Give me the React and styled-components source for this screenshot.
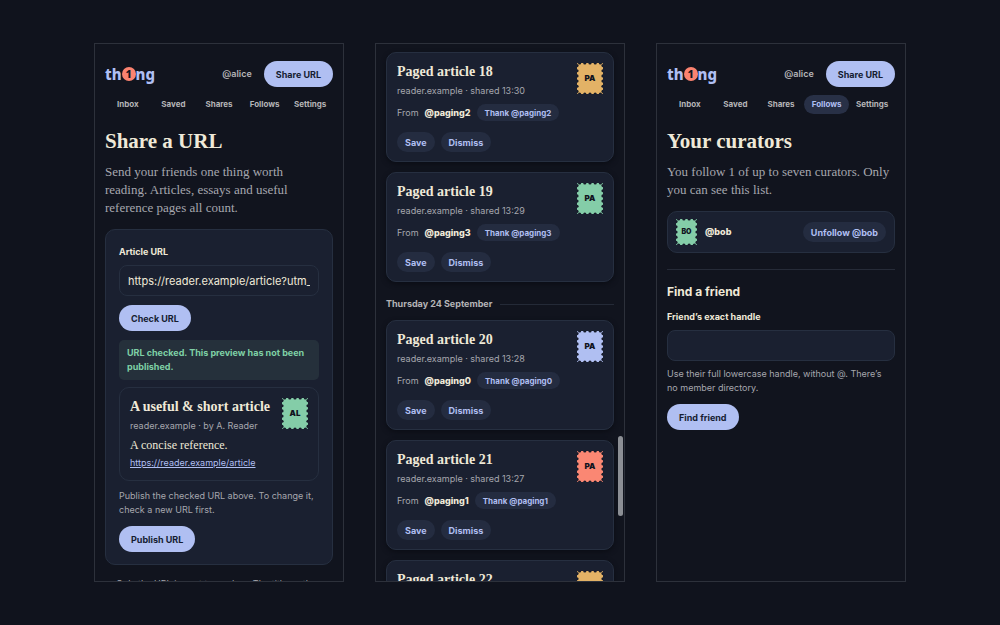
import React from 'react';
import styled, { createGlobalStyle } from 'styled-components';

const sans = `Inter, "Liberation Sans", sans-serif`;
const serif = `"Liberation Serif", serif`;

const GlobalStyle = createGlobalStyle`
  *, *::before, *::after {
    box-sizing: border-box;
  }
  body {
    margin: 0;
    background: #10131d;
    color: #efe9d8;
    font-family: ${sans};
    font-size: 9px;
    line-height: 14px;
  }
  h1, h2, h3, p {
    margin: 0;
  }
  button, input {
    font-family: inherit;
  }
`

const Page = styled.div`
  display: grid;
  grid-template-columns: repeat(3, minmax(0, 1fr));
  gap: 31px;
  min-height: 100vh;
  padding: 43px 94px;
`

const Screen = styled.section`
  position: relative;
  height: calc(100vh - 86px);
  overflow: hidden;
  padding: ${props => props.$scrolled ? '8px' : '17px'} 10px 0;
  border: 1px solid #2d313b;
  background: #11141e;
`

const Header = styled.header`
  display: flex;
  align-items: center;
  gap: 12px;
`

const Brand = styled.a`
  display: flex;
  align-items: center;
  margin-right: auto;
  color: #afbff3;
  font-family: "Noto Sans", sans-serif;
  font-size: 15px;
  font-weight: 800;
  line-height: 20px;
  text-decoration: none;
`

const BrandDot = styled.span`
  display: grid;
  place-items: center;
  width: 14px;
  height: 14px;
  border-radius: 50%;
  background: #fb8370;
  color: #11141e;
  font-size: 11px;
  line-height: 14px;
`

const Account = styled.a`
  color: #b5b4b7;
  font-weight: 600;
  text-decoration: none;
`

const Button = styled.button`
  height: 26px;
  padding: 0 12px;
  border: 0;
  border-radius: 13px;
  background: #b0bff2;
  color: #151c31;
  font-size: 9px;
  font-weight: 700;
`

const Nav = styled.nav`
  display: grid;
  grid-template-columns: repeat(5, 1fr);
  margin-top: 8px;
`

const NavLink = styled.a`
  border-radius: 10px;
  background: ${props => props.$active ? '#283046' : 'transparent'};
  color: ${props => props.$active ? '#b0bff2' : '#b5b4b7'};
  font-size: 8px;
  font-weight: 700;
  line-height: 19px;
  text-align: center;
  text-decoration: none;
`

const Title = styled.h1`
  margin-top: 15px;
  font-family: ${serif};
  font-size: 21px;
  font-weight: 700;
  line-height: 24px;
`

const Lead = styled.p`
  margin-top: 10px;
  color: #a6a7ae;
  font-family: ${serif};
  font-size: 13px;
  line-height: 18px;
`

const Panel = styled.form`
  margin-top: 12px;
  padding: 15px 13px 12px;
  border: 1px solid #262f40;
  border-radius: 10px;
  background: #1a2030;
`

const Label = styled.label`
  display: block;
  font-weight: 700;
`

const Input = styled.input`
  display: block;
  width: 100%;
  height: 31px;
  margin-top: 6px;
  padding: 0 8px;
  border: 1px solid #262f40;
  border-radius: 8px;
  background: #1a2030;
  color: #efe9d8;
  font-size: 11px;
`

const Actions = styled.div`
  display: flex;
  gap: 6px;
  margin-top: 9px;
`

const Status = styled.p`
  margin-top: 9px;
  padding: 6px 8px;
  border-radius: 5px;
  background: #25303b;
  color: #7fd0a6;
  font-weight: 700;
`

const Preview = styled.article`
  display: flex;
  justify-content: space-between;
  margin-top: 7px;
  padding: 10px;
  border: 1px solid #262f40;
  border-radius: 10px;
`

const Note = styled.p`
  margin-top: ${props => props.$spaced ? '8px' : '6px'};
  color: #a6a7ae;
`

const Footnote = styled.p`
  margin-top: 12px;
  padding: 0 11px;
  color: #a6a7ae;
`

const Card = styled.article`
  display: flex;
  justify-content: space-between;
  margin-bottom: 10px;
  padding: 10px 10px 9px;
  border: 1px solid #262f40;
  border-radius: 10px;
  background: #1a2030;
  box-shadow: 0 2px 5px #0b0d15;
`

const CardTitle = styled.h3`
  font-family: ${serif};
  font-size: 14px;
  font-weight: 700;
  line-height: 18px;
`

const Meta = styled.p`
  margin-top: 3px;
  color: #a6a7ae;
`

const Summary = styled.p`
  margin-top: 4px;
  font-family: ${serif};
  font-size: 12px;
  line-height: 16px;
`

const PreviewLink = styled.a`
  display: block;
  margin-top: 3px;
  color: #b0bff2;
`

const From = styled.div`
  display: flex;
  align-items: center;
  gap: 6px;
  margin-top: 6px;
  color: #a6a7ae;
`

const Handle = styled.strong`
  color: #efe9d8;
  font-size: 9px;
  font-weight: 800;
`

const Pill = styled.button`
  height: ${props => props.$small ? '17px' : '20px'};
  padding: 0 8px;
  border: 0;
  border-radius: 10px;
  background: #242c40;
  color: #b0bff2;
  font-size: ${props => props.$small ? '8px' : '9px'};
  font-weight: 700;
`

const CardActions = styled.div`
  display: flex;
  gap: 6px;
  margin-top: 11px;
`

const Day = styled.h2`
  display: flex;
  align-items: center;
  gap: 8px;
  margin: 15px 0 9px;
  color: #b5b4b7;
  font-size: 9px;
  font-weight: 700;
  line-height: 14px;

  &::after {
    content: "";
    flex: 1;
    height: 1px;
    background: #242a37;
  }
`

const ScrollThumb = styled.div`
  position: absolute;
  top: 392px;
  right: 1px;
  width: 5px;
  height: 80px;
  border-radius: 3px;
  background: #8c8f95;
`

const StampSvg = styled.svg`
  flex: none;
`

const Curator = styled.div`
  display: flex;
  align-items: center;
  gap: 8px;
  margin-top: 12px;
  padding: 7px 8px;
  border: 1px solid #262f40;
  border-radius: 10px;
  background: #1a2030;
`

const CuratorName = styled(Handle)`
  margin-right: auto;
`

const Find = styled.form`
  margin-top: 16px;
  padding-top: 14px;
  border-top: 1px solid #262b38;
`

const Heading = styled.h2`
  margin-bottom: 10px;
  font-size: 12px;
  font-weight: 700;
  line-height: 16px;
`

const colors = {
  gold: '#e3b266',
  mint: '#84cda8',
  blue: '#b0bff2',
  coral: '#fa8773',
};

const articles = [
  { id: 18, time: '13:30', from: '@paging2', color: 'gold' },
  { id: 19, time: '13:29', from: '@paging3', color: 'mint' },
  { id: 20, time: '13:28', from: '@paging0', color: 'blue', day: 'Thursday 24 September' },
  { id: 21, time: '13:27', from: '@paging1', color: 'coral' },
  { id: 22, time: '13:26', from: '@paging2', color: 'gold' },
];

// postage stamp with perforated edges
function Stamp({ text, color, small }) {
  const w = small ? 21 : 26;
  const h = small ? 26 : 31;
  const nx = small ? 4 : 5;
  const ny = small ? 5 : 6;
  const holes = [];
  for (let i = 0; i < nx; i++) {
    const x = (w / nx) * (i + 0.5);
    holes.push([x, 0], [x, h]);
  }
  for (let i = 0; i < ny; i++) {
    const y = (h / ny) * (i + 0.5);
    holes.push([0, y], [w, y]);
  }
  return (
    <StampSvg width={w} height={h} viewBox={`0 0 ${w} ${h}`}>
      <rect width={w} height={h} rx="1" fill={colors[color]} />
      {holes.map(([x, y]) => <circle key={`${x}-${y}`} cx={x} cy={y} r="1.6" fill="#151a28" />)}
      <text x={w / 2} y={h / 2 + 2} textAnchor="middle" fontFamily="Inter, sans-serif" fontSize={small ? 7 : 8} fontWeight="900" fill="#11141e">{text}</text>
    </StampSvg>
  );
}

const links = ['Inbox', 'Saved', 'Shares', 'Follows', 'Settings'];

function Top({ active }) {
  return (
    <>
      <Header>
        <Brand href="#">th<BrandDot>1</BrandDot>ng</Brand>
        <Account href="#">@alice</Account>
        <Button type="button">Share URL</Button>
      </Header>
      <Nav>
        {links.map(link => <NavLink key={link} href="#" $active={link === active}>{link}</NavLink>)}
      </Nav>
    </>
  );
}

function ShareScreen() {
  return (
    <Screen>
      <Top />
      <Title>Share a URL</Title>
      <Lead>
        Send your friends one thing worth<br />
        reading. Articles, essays and useful<br />
        reference pages all count.
      </Lead>
      <Panel>
        <Label htmlFor="url">Article URL</Label>
        <Input id="url" type="text" defaultValue="https://reader.example/article?utm_source=share" />
        <Actions><Button type="button">Check URL</Button></Actions>
        <Status>URL checked. This preview has not been published.</Status>
        <Preview>
          <div>
            <CardTitle>A useful &amp; short article</CardTitle>
            <Meta>reader.example · by A. Reader</Meta>
            <Summary>A concise reference.</Summary>
            <PreviewLink href="#">https://reader.example/article</PreviewLink>
          </div>
          <Stamp text="AL" color="mint" />
        </Preview>
        <Note $spaced>Publish the checked URL above. To change it, check a new URL first.</Note>
        <Actions><Button type="button">Publish URL</Button></Actions>
      </Panel>
      <Footnote>Only the URL is sent to readers. The title, author and summary come from the page.</Footnote>
    </Screen>
  );
}

function InboxScreen() {
  return (
    <Screen $scrolled>
      {articles.map(item => (
        <React.Fragment key={item.id}>
          {item.day && <Day>{item.day}</Day>}
          <Card>
            <div>
              <CardTitle>Paged article {item.id}</CardTitle>
              <Meta>reader.example · shared {item.time}</Meta>
              <From>
                From <Handle>{item.from}</Handle>
                <Pill type="button" $small>Thank {item.from}</Pill>
              </From>
              <CardActions>
                <Pill type="button">Save</Pill>
                <Pill type="button">Dismiss</Pill>
              </CardActions>
            </div>
            <Stamp text="PA" color={item.color} />
          </Card>
        </React.Fragment>
      ))}
      <ScrollThumb />
    </Screen>
  );
}

function FollowsScreen() {
  return (
    <Screen>
      <Top active="Follows" />
      <Title>Your curators</Title>
      <Lead>
        You follow 1 of up to seven curators. Only<br />
        you can see this list.
      </Lead>
      <Curator>
        <Stamp text="BO" color="mint" small />
        <CuratorName>@bob</CuratorName>
        <Pill type="button">Unfollow @bob</Pill>
      </Curator>
      <Find>
        <Heading>Find a friend</Heading>
        <Label htmlFor="handle">Friend’s exact handle</Label>
        <Input id="handle" type="text" />
        <Note>
          Use their full lowercase handle, without @. There’s<br />
          no member directory.
        </Note>
        <Actions><Button type="button">Find friend</Button></Actions>
      </Find>
    </Screen>
  );
}

export default function App() {
  return (
    <>
      <GlobalStyle />
      <Page>
        <ShareScreen />
        <InboxScreen />
        <FollowsScreen />
      </Page>
    </>
  );
}
